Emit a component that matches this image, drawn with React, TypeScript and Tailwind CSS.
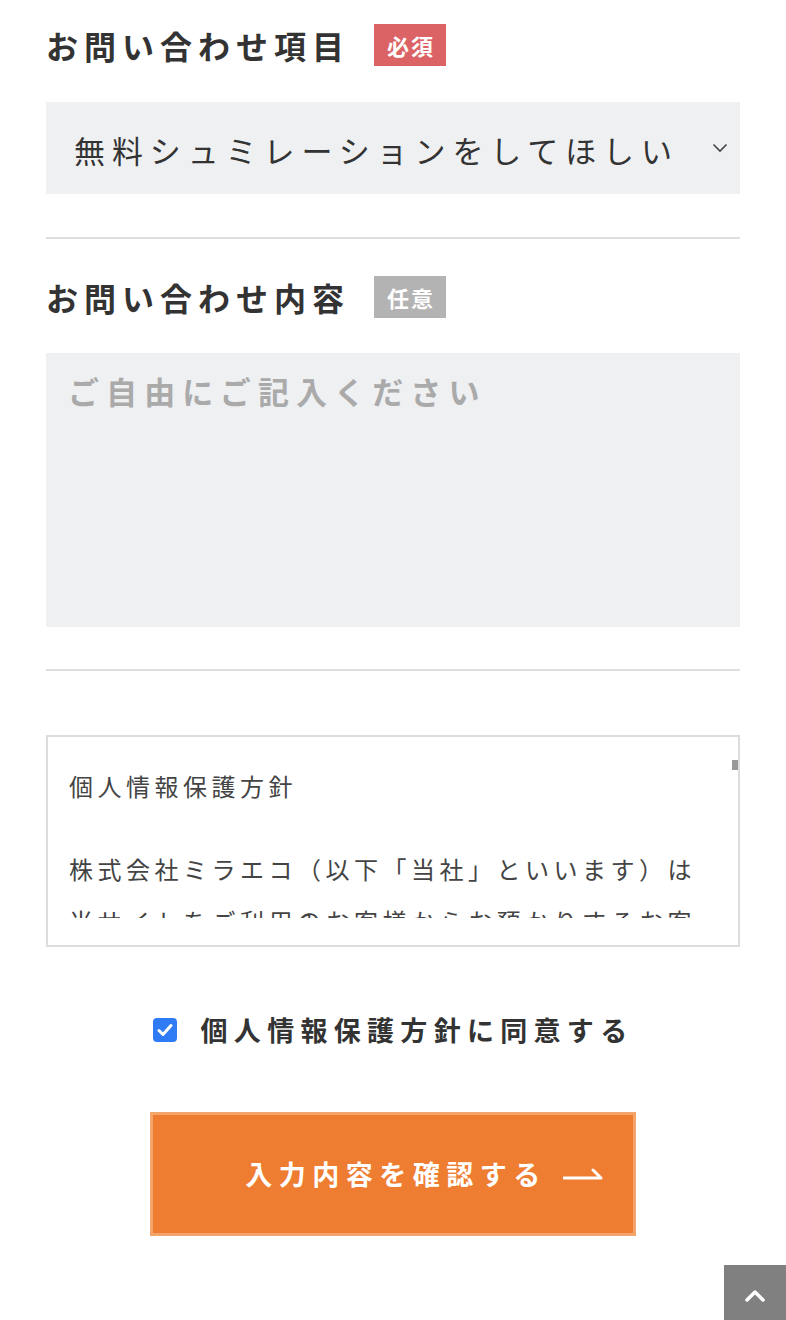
import React from "react";

function Heading({ text, badge, required }: { text: string; badge: string; required: boolean }) {
  return (
    <div className="flex items-center h-[42px]">
      <h2 className="text-[32px] leading-[42px] font-bold tracking-[6px] text-[#333]">{text}</h2>
      <span
        className={`ml-[24px] w-[72px] h-[42px] text-white text-[22px] font-bold flex items-center justify-center tracking-[2px] pl-[2px] ${
          required ? "bg-[#dc6365]" : "bg-[#b3b3b3]"
        }`}
      >
        {badge}
      </span>
    </div>
  );
}

export default function App() {
  return (
    <div className="relative w-[786px] h-[1320px] overflow-hidden bg-white font-[family-name:'Noto_Sans_CJK_JP',sans-serif] text-[#333]">
      <div className="px-[46px] pt-[24px] flex flex-col">
        <Heading text="お問い合わせ項目" badge="必須" required />

        <div className="mt-[36px] h-[92px] bg-[#eff0f2] flex items-center pl-[28px] pr-[12px] pt-[4px]">
          <span className="text-[31px] leading-[40px] tracking-[6.9px] text-[#333] whitespace-nowrap">
            無料シュミレーションをしてほしい
          </span>
          <svg className="ml-auto mb-[4px]" width="16" height="10" viewBox="0 0 16 10">
            <polyline points="1.5,1.5 8,8 14.5,1.5" fill="none" stroke="#444" strokeWidth="1.6" />
          </svg>
        </div>

        <div className="mt-[43px] h-[2px] bg-[#dedede]" />

        <div className="mt-[37px]">
          <Heading text="お問い合わせ内容" badge="任意" required={false} />
        </div>

        <textarea
          className="mt-[35px] h-[274px] w-full bg-[#eff0f2] resize-none outline-none pt-[15px] pl-[22px] text-[31px] leading-[45px] tracking-[7.1px] placeholder:text-[#aaaaaa] placeholder:font-bold"
          placeholder="ご自由にご記入ください"
        />

        <div className="mt-[42px] h-[2px] bg-[#dedede]" />

        <div className="relative mt-[64px] h-[212px] border-2 border-[#dddddd] pt-[23px] pl-[21px]">
          <div className="h-[158px] overflow-hidden text-[24px] leading-[52px] tracking-[4.5px] text-[#444] whitespace-nowrap">
            <p>個人情報保護方針</p>
            <p className="mt-[31px]">
              株式会社ミラエコ（以下「当社」といいます）は
              <br />
              当サイトをご利用のお客様からお預かりするお客
              <br />
              様の個人情報を適切に保護することを社会的責務
            </p>
          </div>
          <div className="absolute top-[23px] right-0 w-[6px] h-[10px] bg-[#999999]" />
        </div>

        <div className="mt-[63px] flex items-center justify-center h-[40px]">
          <span className="w-[24px] h-[24px] rounded-[4px] bg-[#2f7bf5] flex items-center justify-center">
            <svg width="16" height="14" viewBox="0 0 16 14">
              <polyline points="2,7.5 6,11.5 14,2.5" fill="none" stroke="white" strokeWidth="3" strokeLinecap="round" strokeLinejoin="round" />
            </svg>
          </span>
          <span className="ml-[24px] text-[27px] leading-[40px] font-bold tracking-[6.3px] text-[#333]">
            個人情報保護方針に同意する
          </span>
        </div>

        <div className="mt-[62px] flex justify-center">
          <button className="relative w-[486px] h-[124px] bg-[#ef7d31] border-[3px] border-[#f4a56c] flex items-center justify-center">
            <span className="text-white text-[27px] leading-[40px] font-bold tracking-[6.5px] pl-[6px]">
              入力内容を確認する
            </span>
            <svg className="absolute right-[30px] top-[52px]" width="40" height="14" viewBox="0 0 40 14">
              <path d="M1 11 H38 L30 3" fill="none" stroke="white" strokeWidth="3" strokeLinecap="round" strokeLinejoin="round" />
            </svg>
          </button>
        </div>
      </div>

      <div className="absolute right-0 top-[1265px] w-[62px] h-[62px] bg-[#808080] flex items-center justify-center">
        <svg width="20" height="14" viewBox="0 0 20 14">
          <polyline points="2,11 10,3 18,11" fill="none" stroke="white" strokeWidth="3.5" strokeLinecap="round" strokeLinejoin="round" />
        </svg>
      </div>
    </div>
  );
}
